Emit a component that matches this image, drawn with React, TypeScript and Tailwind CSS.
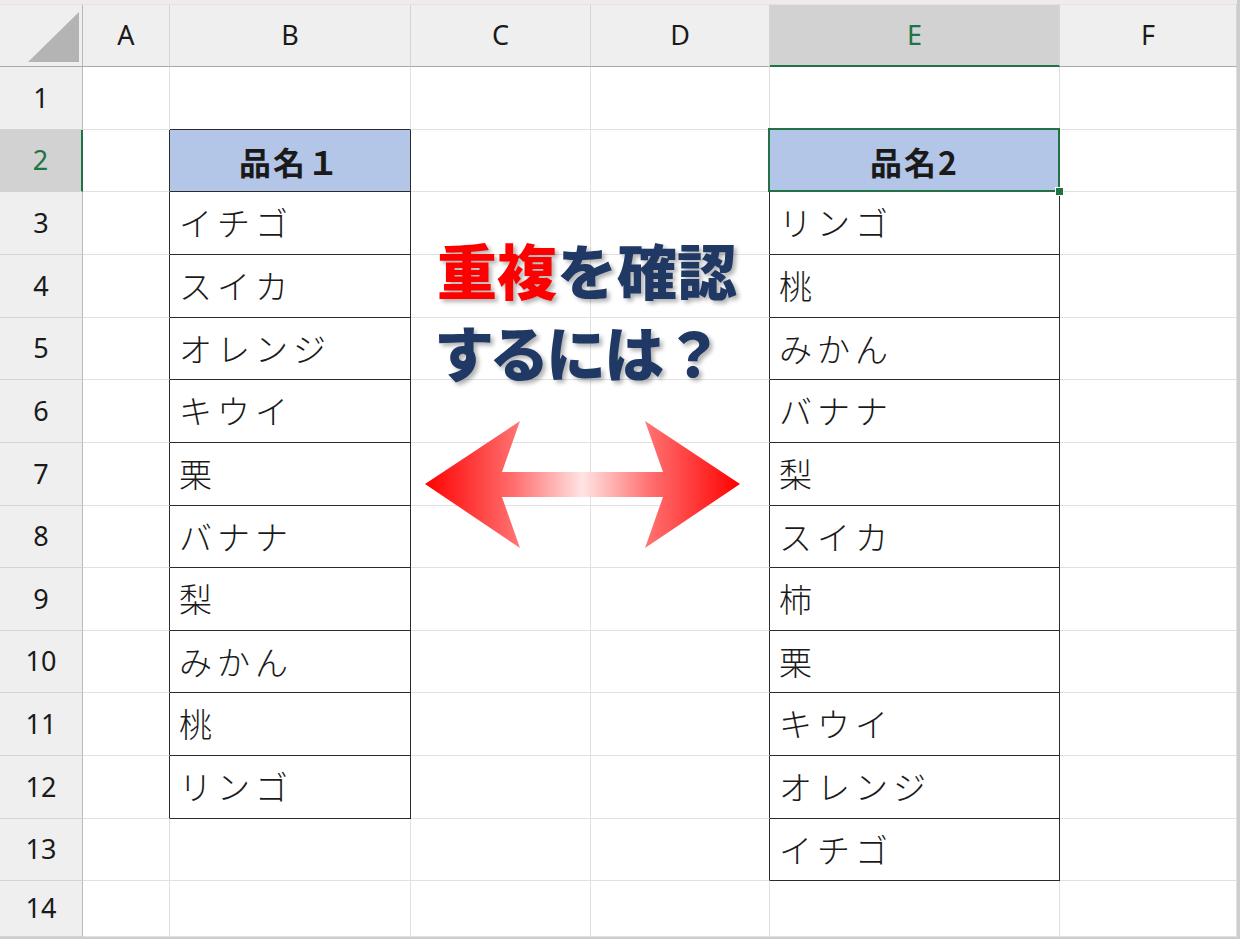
import { clsx as cn } from 'clsx'

const COLS = [
  { key: 'A', w: 'w-[87px]' },
  { key: 'B', w: 'w-[241px]' },
  { key: 'C', w: 'w-[180px]' },
  { key: 'D', w: 'w-[179px]' },
  { key: 'E', w: 'w-[290px]' },
  { key: 'F', w: 'flex-1' },
]

const ROW_H = [
  'h-[63px]', 'h-[62px]', 'h-[63px]', 'h-[63px]', 'h-[62px]', 'h-[63px]', 'h-[63px]',
  'h-[62px]', 'h-[63px]', 'h-[62px]', 'h-[63px]', 'h-[63px]', 'h-[62px]', 'h-[56px]',
]

const LIST1 = ['イチゴ', 'スイカ', 'オレンジ', 'キウイ', '栗', 'バナナ', '梨', 'みかん', '桃', 'リンゴ']
const LIST2 = ['リンゴ', '桃', 'みかん', 'バナナ', '梨', 'スイカ', '柿', '栗', 'キウイ', 'オレンジ', 'イチゴ']

const jp = 'font-["Noto_Sans_CJK_JP","Noto_Sans",sans-serif]'
const ui = 'font-["Noto_Sans","Liberation_Sans",sans-serif]'

function cellText(row: number, col: string) {
  if (col === 'B') {
    if (row === 2) return '品名１'
    if (row >= 3 && row <= 12) return LIST1[row - 3]
  }
  if (col === 'E') {
    if (row === 2) return '品名2'
    if (row >= 3 && row <= 13) return LIST2[row - 3]
  }
  return ''
}

function inTable(row: number, col: string) {
  return (col === 'B' && row >= 2 && row <= 12) || (col === 'E' && row >= 2 && row <= 13)
}

function Cell({ row, col, w }: { row: number; col: string; w: string }) {
  const text = cellText(row, col)
  const isHead = row === 2 && (col === 'B' || col === 'E')
  const table = inTable(row, col)
  // dark right edge for the cell left of a table, dark bottom above a table
  const darkRight = table || inTable(row, col === 'A' ? 'B' : col === 'D' ? 'E' : '')
  const darkBottom = table || (row === 1 && (col === 'B' || col === 'E'))

  return (
    <div
      className={cn(
        'relative h-full shrink-0 border-r border-b flex items-center',
        w,
        darkRight ? 'border-r-[#2b2b2b]' : 'border-r-[#e1e1e1]',
        darkBottom ? 'border-b-[#2b2b2b]' : 'border-b-[#e1e1e1]',
        isHead
          ? 'bg-[#b4c6e7] justify-center font-bold text-[32px] tracking-[2px]'
          : 'pl-[9px] font-light text-[33px] tracking-[5px]',
        jp,
        'text-[#1a1a1a]'
      )}
    >
      {text}
      {row === 2 && col === 'E' && (
        <>
          <div className="absolute z-10 -left-[2px] -top-[2px] -right-[1px] -bottom-[1px] border-2 border-[#217346]" />
          <div className="absolute z-20 -right-[5px] -bottom-[5px] w-[9px] h-[9px] bg-[#217346] border border-white" />
        </>
      )}
    </div>
  )
}

function Arrow() {
  return (
    <svg
      className="absolute left-[420px] top-[415px]"
      width="330"
      height="140"
      viewBox="0 0 330 140"
    >
      <defs>
        <linearGradient id="arrowFill" x1="0" x2="1" y1="0" y2="0">
          <stop offset="0" stopColor="#ff0000" />
          <stop offset="0.28" stopColor="#ff6d6d" />
          <stop offset="0.5" stopColor="#ffe4e4" />
          <stop offset="0.72" stopColor="#ff6d6d" />
          <stop offset="1" stopColor="#ff0000" />
        </linearGradient>
      </defs>
      <polygon
        points="5,69 100,6 82,57 243,57 225,6 320,69 225,133 243,82 82,82 100,133"
        fill="url(#arrowFill)"
      />
    </svg>
  )
}

export default function App() {
  return (
    <div className="relative w-[1240px] h-[939px] overflow-hidden bg-white flex flex-col border-r-[3px] border-b-[2px] border-[#cdcdcd]">
      {/* top strip */}
      <div className="h-[5px] shrink-0 bg-[#efebeb] border-b border-[#f0dcdc]" />

      {/* column headers */}
      <div className={cn('flex h-[62px] shrink-0', ui)}>
        <div className="relative w-[83px] shrink-0 bg-[#efefef] border-r border-r-[#b9b9b9] border-b border-b-[#a9a9a9]">
          <svg className="absolute left-[28px] top-[7px]" width="52" height="51" viewBox="0 0 52 51">
            <polygon points="0,50 51,0 51,50" fill="#b4b4b4" />
          </svg>
        </div>
        {COLS.map((c) => (
          <div
            key={c.key}
            className={cn(
              'shrink-0 flex items-center justify-center text-[27px] border-r border-r-[#d4d4d4]',
              c.w,
              c.key === 'E'
                ? 'bg-[#d2d2d2] text-[#217346] border-b-2 border-b-[#217346] border-r-[#b9b9b9]'
                : 'bg-[#efefef] text-[#1a1a1a] border-b border-b-[#a9a9a9]'
            )}
          >
            {c.key}
          </div>
        ))}
      </div>

      {/* rows */}
      {ROW_H.map((h, i) => {
        const row = i + 1
        return (
          <div key={row} className={cn('flex shrink-0', h)}>
            <div
              className={cn(
                'w-[83px] shrink-0 flex items-center justify-center text-[27px] border-b border-b-[#d4d4d4]',
                ui,
                row === 2
                  ? 'bg-[#d2d2d2] text-[#217346] border-r-2 border-r-[#217346]'
                  : 'bg-[#efefef] text-[#1a1a1a] border-r border-r-[#b9b9b9]'
              )}
            >
              {row}
            </div>
            {COLS.map((c) => (
              <Cell key={c.key} row={row} col={c.key} w={c.w} />
            ))}
          </div>
        )
      })}

      {/* title */}
      <div
        className={cn(
          'absolute left-[437px] top-[228px] font-black text-[60px] leading-[82px] text-[#203864] [text-shadow:3px_3px_4px_rgba(0,0,0,0.3)]',
          jp
        )}
      >
        <div>
          <span className="text-[#ff0000]">重複</span>を確認
        </div>
        <div>
          <span className="[font-feature-settings:'palt']">するには</span>
          <span>？</span>
        </div>
      </div>

      <Arrow />
    </div>
  )
}
